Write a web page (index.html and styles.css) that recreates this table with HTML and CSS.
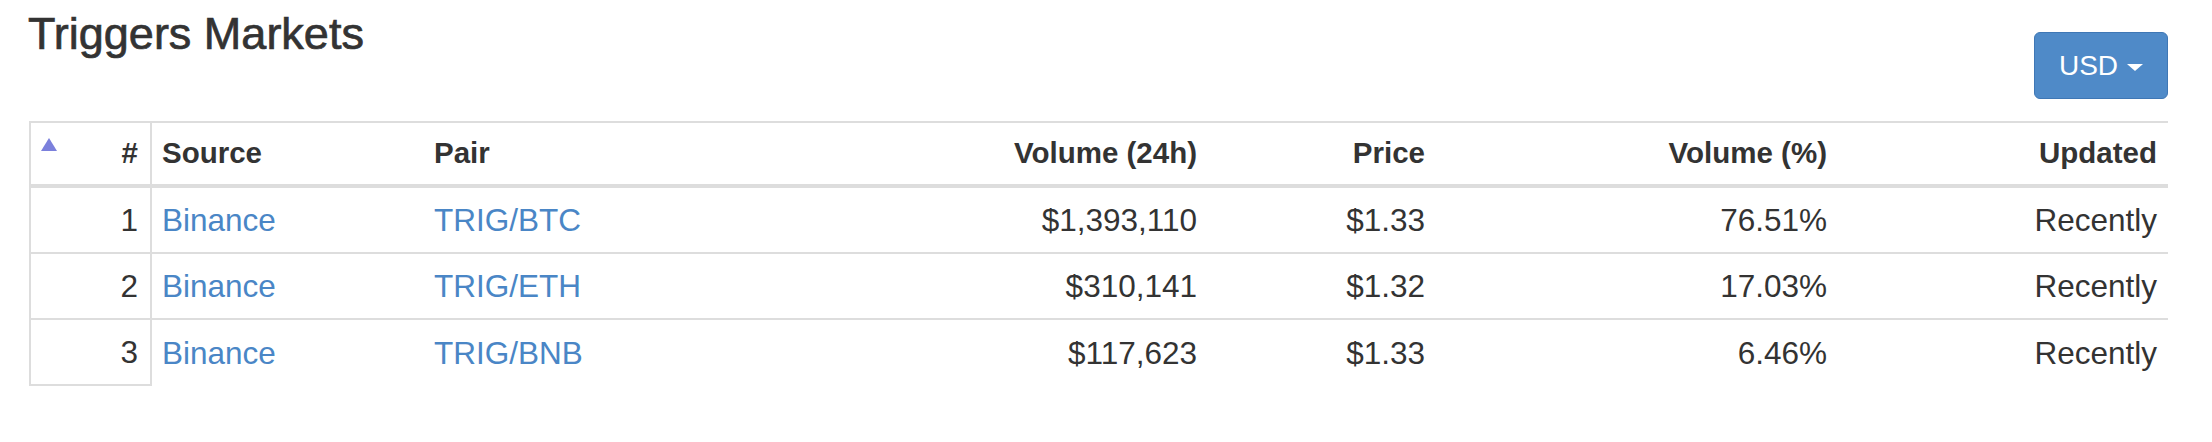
FILE: index.html
```html
<!DOCTYPE html>
<html lang="en">
<head>
<meta charset="utf-8">
<title>Triggers Markets</title>
<link rel="stylesheet" href="styles.css">
</head>
<body>
<div class="page">
  <div class="head">
    <h2 class="title">Triggers Markets</h2>
    <button class="btn" type="button"><span class="btn-label">USD</span><span class="caret"></span></button>
  </div>
  <table class="markets">
    <colgroup>
      <col class="c-rank">
      <col class="c-source">
      <col class="c-pair">
      <col class="c-vol">
      <col class="c-price">
      <col class="c-pct">
      <col class="c-upd">
    </colgroup>
    <thead>
      <tr>
        <th class="rank"><span class="sort"><svg width="16" height="13" viewBox="0 0 16 13"><polygon points="8,0 16,13 0,13" fill="#7b80dc"/></svg></span>#</th>
        <th class="left">Source</th>
        <th class="left">Pair</th>
        <th>Volume (24h)</th>
        <th>Price</th>
        <th>Volume (%)</th>
        <th>Updated</th>
      </tr>
    </thead>
    <tbody>
      <tr>
        <td class="rank">1</td>
        <td class="left"><a href="#">Binance</a></td>
        <td class="left"><a href="#">TRIG/BTC</a></td>
        <td>$1,393,110</td>
        <td>$1.33</td>
        <td>76.51%</td>
        <td>Recently</td>
      </tr>
      <tr>
        <td class="rank">2</td>
        <td class="left"><a href="#">Binance</a></td>
        <td class="left"><a href="#">TRIG/ETH</a></td>
        <td>$310,141</td>
        <td>$1.32</td>
        <td>17.03%</td>
        <td>Recently</td>
      </tr>
      <tr class="last">
        <td class="rank">3</td>
        <td class="left"><a href="#">Binance</a></td>
        <td class="left"><a href="#">TRIG/BNB</a></td>
        <td>$117,623</td>
        <td>$1.33</td>
        <td>6.46%</td>
        <td>Recently</td>
      </tr>
    </tbody>
  </table>
</div>
</body>
</html>
```
FILE: styles.css
```css
html, body {
  margin: 0;
  padding: 0;
  background: #fff;
}
body {
  font-family: "Liberation Sans", Arial, Helvetica, sans-serif;
  color: #333;
}
.page {
  padding: 0 44px 0 29px;
}
.head {
  display: flex;
  justify-content: space-between;
  align-items: flex-start;
}
.title {
  margin: 9px 0 0 -1px;
  font-size: 45px;
  line-height: 49.5px;
  font-weight: 400;
  color: #333;
  -webkit-text-stroke: 0.7px #333;
}
.btn {
  margin-top: 32px;
  width: 134px;
  height: 67px;
  box-sizing: border-box;
  display: flex;
  align-items: center;
  justify-content: center;
  gap: 9px;
  padding: 0;
  background: #4f8ac8;
  border: 1px solid #3f77b5;
  border-radius: 6px;
  color: #fff;
  font-family: "Liberation Sans", Arial, Helvetica, sans-serif;
  font-size: 28px;
  line-height: 1;
  cursor: pointer;
}
.btn-label {
  display: block;
}
.caret {
  display: block;
  width: 0;
  height: 0;
  margin-top: 4px;
  border-top: 7px solid #fff;
  border-left: 8px solid transparent;
  border-right: 8px solid transparent;
}
.markets {
  margin-top: 22px;
  width: 2139px;
  table-layout: fixed;
  border-collapse: separate;
  border-spacing: 0;
}
.c-rank { width: 123px; }
.c-source { width: 272px; }
.c-pair { width: 376px; }
.c-vol { width: 408px; }
.c-price { width: 228px; }
.c-pct { width: 402px; }
.c-upd { width: 330px; }

.markets th {
  font-size: 29.5px;
  font-weight: 700;
  line-height: 60px;
  padding: 0 11px 1px 10px;
  text-align: right;
  white-space: nowrap;
  border-top: 2px solid #ddd;
  border-bottom: 4px solid #ddd;
}
.markets td {
  font-size: 31.5px;
  font-weight: 400;
  line-height: 64px;
  padding: 0 11px 0 10px;
  text-align: right;
  white-space: nowrap;
  border-bottom: 2px solid #ddd;
}
.markets .last td {
  border-bottom: 0;
}
.markets .last td.rank {
  border-bottom: 2px solid #ddd;
}
.markets th.left,
.markets td.left {
  text-align: left;
}
.markets .rank {
  border-left: 2px solid #ddd;
  border-right: 2px solid #ddd;
  padding-right: 12px;
}
.sort {
  float: left;
  display: block;
  width: 16px;
  height: 13px;
  margin-top: 15px;
  line-height: 0;
}
.sort svg {
  display: block;
}
.markets a {
  color: #4a86c6;
  text-decoration: none;
}
```
